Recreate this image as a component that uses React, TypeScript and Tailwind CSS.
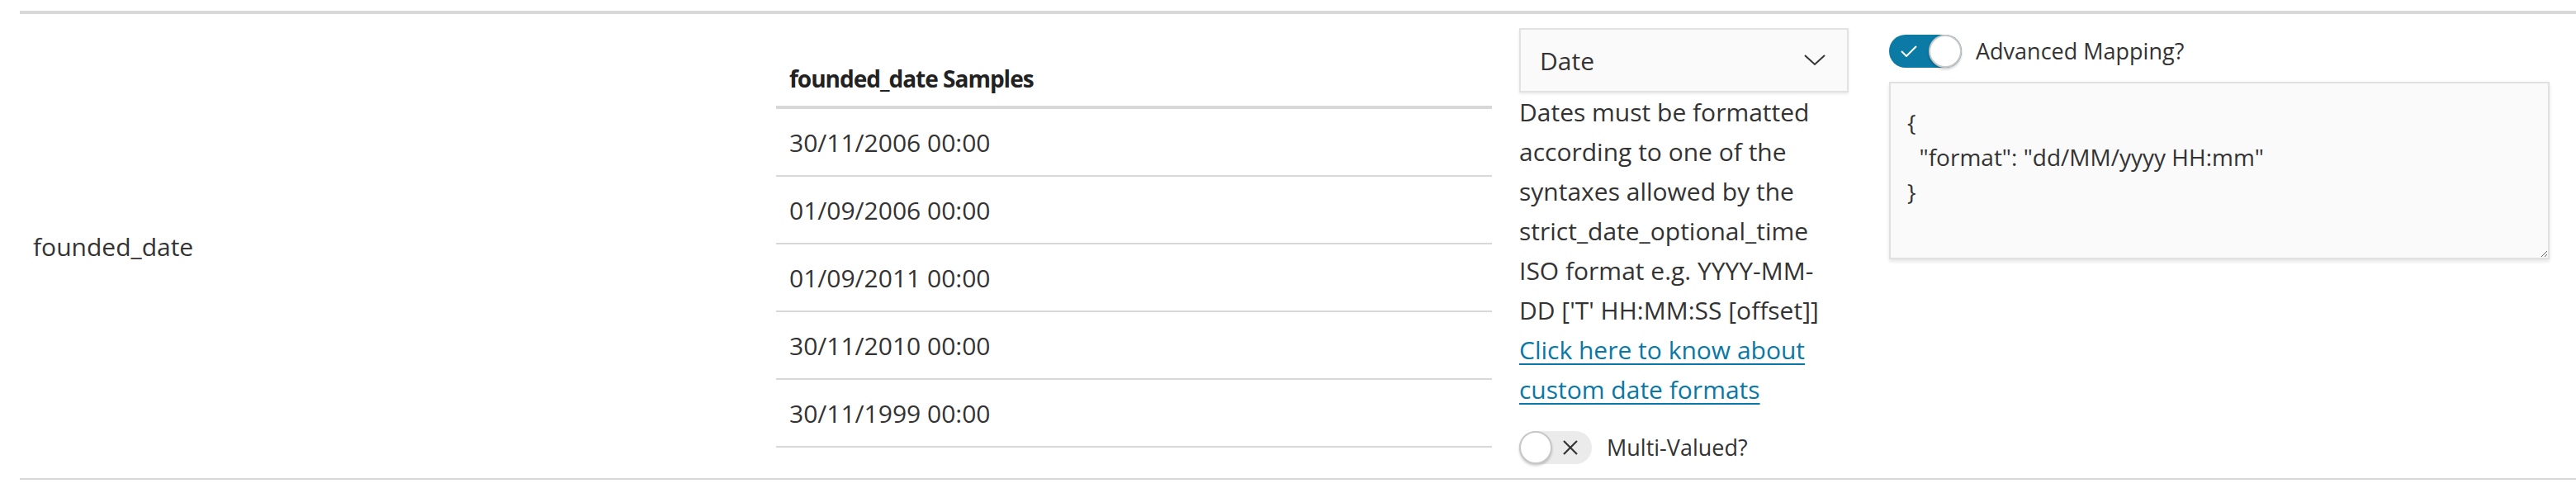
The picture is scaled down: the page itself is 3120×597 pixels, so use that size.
import React from 'react';

const samples = [
  '30/11/2006 00:00',
  '01/09/2006 00:00',
  '01/09/2011 00:00',
  '30/11/2010 00:00',
  '30/11/1999 00:00',
];

const helpLines = [
  'Dates must be formatted',
  'according to one of the',
  'syntaxes allowed by the',
  'strict_date_optional_time',
  'ISO format e.g. YYYY-MM-',
  "DD ['T' HH:MM:SS [offset]]",
];

function Toggle({ on }: { on: boolean }) {
  if (on) {
    return (
      <div className="relative w-[88px] h-10 rounded-full bg-[#0b7aa5] flex items-center shrink-0">
        <svg width="20" height="14" viewBox="0 0 20 14" className="ml-[14px]">
          <polyline points="1,7 7,13 19,1" fill="none" stroke="#fff" strokeWidth="2" />
        </svg>
        <div className="absolute right-0 top-0 w-10 h-10 rounded-full bg-white border-2 border-[#c8c8c8] shadow-[0_2px_3px_rgba(0,0,0,0.2)]" />
      </div>
    );
  }
  return (
    <div className="relative w-[88px] h-10 rounded-full bg-[#ebebeb] flex items-center shrink-0">
      <div className="w-10 h-10 rounded-full bg-white border-2 border-[#c8c8c8] shadow-[0_2px_3px_rgba(0,0,0,0.2)]" />
      <svg width="20" height="20" viewBox="0 0 20 20" className="ml-[12px]">
        <path d="M2 2 L18 18 M18 2 L2 18" stroke="#333" strokeWidth="2.2" />
      </svg>
    </div>
  );
}

export default function App() {
  return (
    <div className="bg-white w-[3120px] h-[597px] pt-[13px] text-[#333] font-['Open_Sans',sans-serif]">
      <div className="ml-6 border-t-4 border-b-2 border-[#d8d8d8] flex items-center pt-[17px] pb-4">
        {/* field name */}
        <div className="w-[916px] pl-4 text-[30px] shrink-0">founded_date</div>

        {/* samples table */}
        <div className="w-[867px] shrink-0 text-[30px]">
          <div className="h-[78px] border-b-4 border-[#d8d8d8] px-4 flex items-center pt-2 text-[28px] font-bold tracking-[-1px] text-[#222]">
            founded_date Samples
          </div>
          {samples.map((s) => (
            <div key={s} className="h-[82px] border-b-2 border-[#d8d8d8] px-4 flex items-center">
              {s}
            </div>
          ))}
        </div>

        {/* type column */}
        <div className="ml-[33px] w-[399px] shrink-0 flex flex-col">
          <div className="h-[78px] border-2 border-[#e2e2e2] bg-[#fafafa] shadow-[0_2px_3px_rgba(0,0,0,0.08)] flex items-center justify-between pl-[23px] pr-[26px] text-[30px]">
            <span>Date</span>
            <svg width="26" height="14" viewBox="0 0 26 14">
              <polyline points="1,1 13,12 25,1" fill="none" stroke="#333" strokeWidth="2" />
            </svg>
          </div>
          <div className="text-[30px] leading-[48px] whitespace-nowrap">
            {helpLines.map((l) => (
              <div key={l}>{l}</div>
            ))}
            <a href="#" className="block text-[#0a78a6] underline decoration-2 underline-offset-[5px]">
              Click here to know about
            </a>
            <a href="#" className="block text-[#0a78a6] underline decoration-2 underline-offset-[5px]">
              custom date formats
            </a>
          </div>
          <div className="mt-[26px] flex items-center gap-[18px]">
            <Toggle on={false} />
            <span className="text-[27px]">Multi-Valued?</span>
          </div>
        </div>

        {/* advanced mapping */}
        <div className="ml-[49px] w-[800px] shrink-0 self-start mt-2 flex flex-col">
          <div className="flex items-center gap-[17px]">
            <Toggle on={true} />
            <span className="text-[27px]">Advanced Mapping?</span>
          </div>
          <textarea
            readOnly
            className="mt-4 h-[215px] w-full border-2 border-[#e0e0e0] bg-[#fafafa] shadow-[0_3px_4px_rgba(0,0,0,0.1)] pt-[26px] px-5 text-[28px] leading-[42px] text-[#333] outline-none font-['Open_Sans',sans-serif]"
            defaultValue={'{\n  "format": "dd/MM/yyyy HH:mm"\n}'}
          />
        </div>
      </div>
    </div>
  );
}
